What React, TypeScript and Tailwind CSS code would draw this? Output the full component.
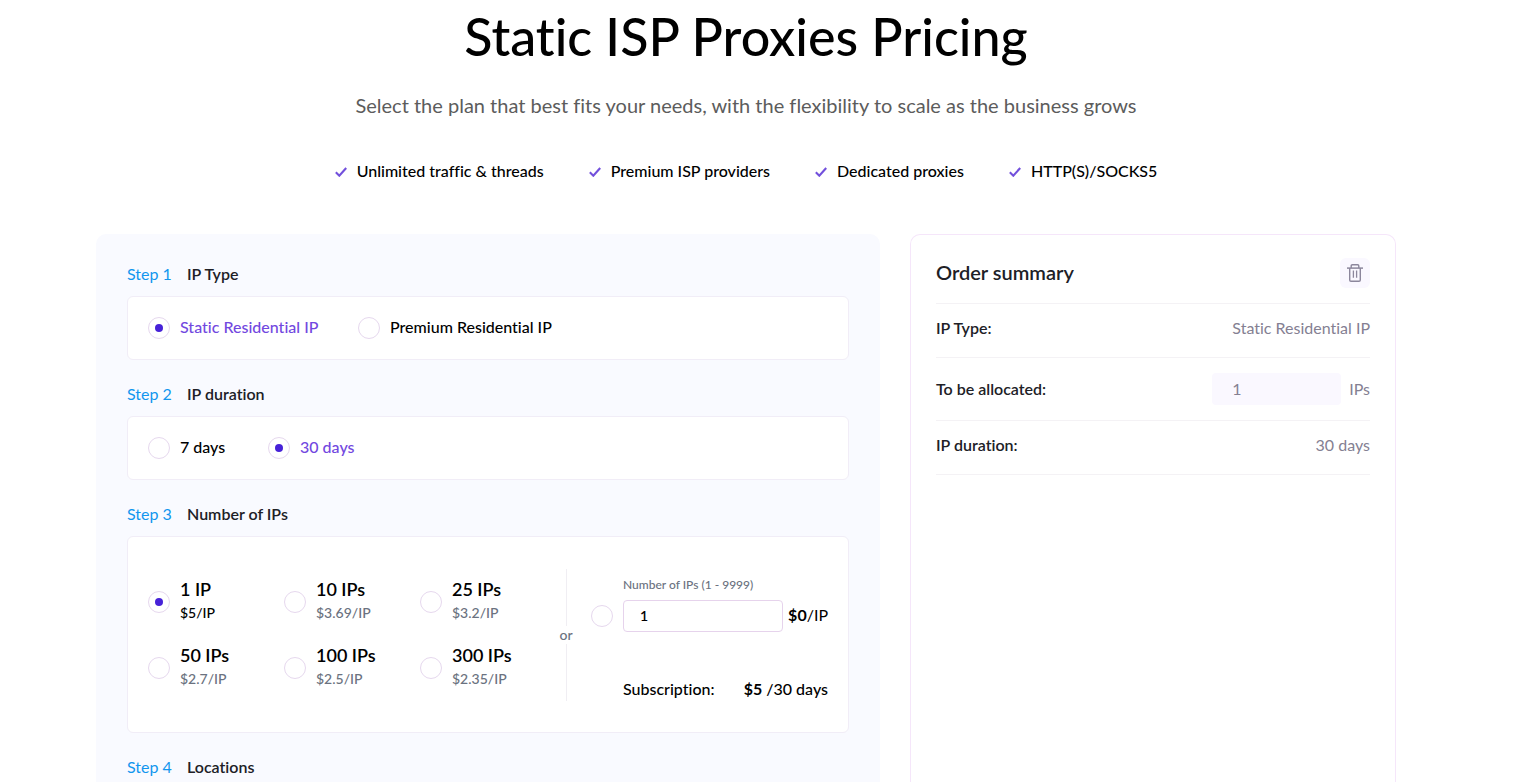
import { useState } from "react";
import type { ReactNode } from "react";

const features = [
  "Unlimited traffic & threads",
  "Premium ISP providers",
  "Dedicated proxies",
  "HTTP(S)/SOCKS5",
];

const ipTypes = ["Static Residential IP", "Premium Residential IP"];
const durations = ["7 days", "30 days"];

const plans = [
  { name: "1 IP", price: "$5/IP" },
  { name: "10 IPs", price: "$3.69/IP" },
  { name: "25 IPs", price: "$3.2/IP" },
  { name: "50 IPs", price: "$2.7/IP" },
  { name: "100 IPs", price: "$2.5/IP" },
  { name: "300 IPs", price: "$2.35/IP" },
];

const radioClass =
  "grid size-[22px] shrink-0 appearance-none place-content-center rounded-full border border-[#e6d8ee] bg-white before:size-2 before:rounded-full checked:before:bg-[#4722d8]";

function CheckIcon() {
  return (
    <svg width="12" height="10" viewBox="0 0 12 10" className="mt-0.5 shrink-0" aria-hidden="true">
      <path d="M0.8 5.3 4.3 8.7 11.2 1" fill="none" stroke="#7250dc" strokeWidth="2.1" />
    </svg>
  );
}

function TrashIcon() {
  return (
    <svg width="16" height="18" viewBox="0 0 16 18" fill="none" stroke="#8c879c" aria-hidden="true">
      <path d="M0 4.1h16" strokeWidth="1.5" />
      <path d="M4.2 4V1.9Q4.2 0.8 5.3 0.8h5.4Q11.8 0.8 11.8 1.9V4" strokeWidth="1.4" />
      <path d="M2.7 4v11.9q0 1.3 1.3 1.3h8q1.3 0 1.3-1.3V4" strokeWidth="1.4" />
      <path d="M6.4 6.5v7.2M9.6 6.5v7.2" strokeWidth="1.3" />
    </svg>
  );
}

function Step({ n, title, children }: { n: number; title: string; children?: ReactNode }) {
  return (
    <section className="mb-[22px] last:mb-0">
      <h2 className="flex text-base leading-6">
        <span className="w-[60px] text-[#1296ee]">Step {n}</span>
        <span className="font-semibold text-[#202026]">{title}</span>
      </h2>
      {children && (
        <div className="mt-2.5 rounded-md border border-[#f1edf7] bg-white px-5">{children}</div>
      )}
    </section>
  );
}

function Choice({
  group,
  label,
  checked,
  onSelect,
}: {
  group: string;
  label: string;
  checked: boolean;
  onSelect: () => void;
}) {
  return (
    <label className="flex items-center gap-2.5 whitespace-nowrap">
      <input type="radio" name={group} checked={checked} onChange={onSelect} className={radioClass} />
      <span className={checked ? "pb-0.5 font-medium text-[#7248e0]" : "pb-0.5 font-medium text-black"}>{label}</span>
    </label>
  );
}

function SummaryRow({ label, children }: { label: string; children: ReactNode }) {
  return (
    <div className="flex items-center justify-between border-b border-[#f4f2f5] pt-3 pb-[17px] has-[input]:py-[15px]">
      <span className="font-semibold text-[#202026]">{label}</span>
      <div className="flex items-center text-[#848092]">{children}</div>
    </div>
  );
}

export default function App() {
  const [ipType, setIpType] = useState(ipTypes[0]);
  const [duration, setDuration] = useState(durations[1]);
  const [plan, setPlan] = useState("1 IP");
  const [custom, setCustom] = useState("1");
  const [allocated, setAllocated] = useState("1");

  return (
    <main className="flex min-h-screen flex-col bg-white pr-[31px] font-['Lato',sans-serif] text-base text-black [font-variant-ligatures:none]">
      <header className="flex flex-col items-center pt-1 text-center">
        <h1 className="text-[52px] leading-[64px] font-medium">Static ISP Proxies Pricing</h1>
        <p className="mt-[21px] text-xl leading-8 text-[#5c5c5c]">
          Select the plan that best fits your needs, with the flexibility to scale as the business grows
        </p>
        <ul className="mt-[38px] flex flex-wrap justify-center gap-x-[45px] leading-6 font-medium">
          {features.map((f) => (
            <li key={f} className="flex items-center gap-2.5">
              <CheckIcon />
              {f}
            </li>
          ))}
        </ul>
      </header>

      <div className="mx-auto mt-[51px] grid w-full max-w-[1300px] grow grid-cols-[784fr_486fr] gap-[30px]">
        <form className="rounded-t-[10px] bg-[#f9faff] px-[31px] pt-7">
          <Step n={1} title="IP Type">
            <div className="grid h-[62px] grid-cols-[210px_1fr] items-center">
              {ipTypes.map((t) => (
                <Choice key={t} group="type" label={t} checked={ipType === t} onSelect={() => setIpType(t)} />
              ))}
            </div>
          </Step>
          <Step n={2} title="IP duration">
            <div className="grid h-[62px] grid-cols-[120px_1fr] items-center">
              {durations.map((d) => (
                <Choice key={d} group="duration" label={d} checked={duration === d} onSelect={() => setDuration(d)} />
              ))}
            </div>
          </Step>
          <Step n={3} title="Number of IPs">
            <div className="flex pt-8 pb-[31px]">
              <div className="grid grow grid-cols-3">
                {plans.map((p) => (
                  <label key={p.name} className="flex h-[66px] items-center gap-2.5">
                    <input
                      type="radio"
                      name="plan"
                      checked={plan === p.name}
                      onChange={() => setPlan(p.name)}
                      className={radioClass}
                    />
                    <span className="flex flex-col pb-0.5">
                      <span className="text-lg leading-6 font-semibold">{p.name}</span>
                      <span
                        className={
                          plan === p.name
                            ? "text-sm leading-6 font-medium"
                            : "text-sm leading-6 font-medium text-[#6b7280]"
                        }
                      >
                        {p.price}
                      </span>
                    </span>
                  </label>
                ))}
              </div>
              <div className="flex w-5 flex-col items-center text-sm leading-[18px] font-medium text-[#6b7280]">
                <span className="w-px grow bg-[#f0eef3]" />
                <span>or</span>
                <span className="w-px grow bg-[#f0eef3]" />
              </div>
              <div className="ml-[15px] grid w-[237px] grid-cols-[32px_160px_1fr] items-center pt-1">
                <label htmlFor="custom-count" className="col-span-2 col-start-2 mb-[3px] text-xs leading-6 font-medium text-[#6b7280]">
                  Number of IPs (1 - 9999)
                </label>
                <input
                  type="radio"
                  name="plan"
                  aria-label="Custom number of IPs"
                  checked={plan === "custom"}
                  onChange={() => setPlan("custom")}
                  className={radioClass}
                />
                <input
                  id="custom-count"
                  value={custom}
                  onChange={(e) => setCustom(e.target.value)}
                  className="h-8 w-full rounded border border-[#e6d3ec] bg-white px-4 pb-0.5 text-sm font-semibold outline-none"
                />
                <span className="pb-0.5 text-right">
                  <b className="font-bold">$0</b>/IP
                </span>
                <div className="col-span-2 col-start-2 mt-[45px] flex justify-between leading-6 font-medium">
                  <span>Subscription:</span>
                  <span>
                    <b className="font-bold">$5</b> /30 days
                  </span>
                </div>
              </div>
            </div>
          </Step>
          <Step n={4} title="Locations" />
        </form>

        <aside className="rounded-t-[10px] border border-b-0 border-[#f5e6fa] px-[25px] pt-[23px]">
          <div className="flex items-center justify-between border-b border-[#f4f2f5] pb-[15px]">
            <h2 className="pb-0.5 text-xl leading-7 font-semibold text-[#202026]">Order summary</h2>
            <button type="button" aria-label="Clear order" className="grid size-[30px] place-items-center rounded-md bg-[#faf8ff]">
              <TrashIcon />
            </button>
          </div>
          <SummaryRow label="IP Type:">{ipType}</SummaryRow>
          <SummaryRow label="To be allocated:">
            <input
              aria-label="IPs to be allocated"
              value={allocated}
              onChange={(e) => setAllocated(e.target.value)}
              className="mr-2 h-8 w-[129px] rounded bg-[#faf8ff] px-5 pb-0.5 outline-none"
            />
            IPs
          </SummaryRow>
          <SummaryRow label="IP duration:">{duration}</SummaryRow>
        </aside>
      </div>
    </main>
  );
}
